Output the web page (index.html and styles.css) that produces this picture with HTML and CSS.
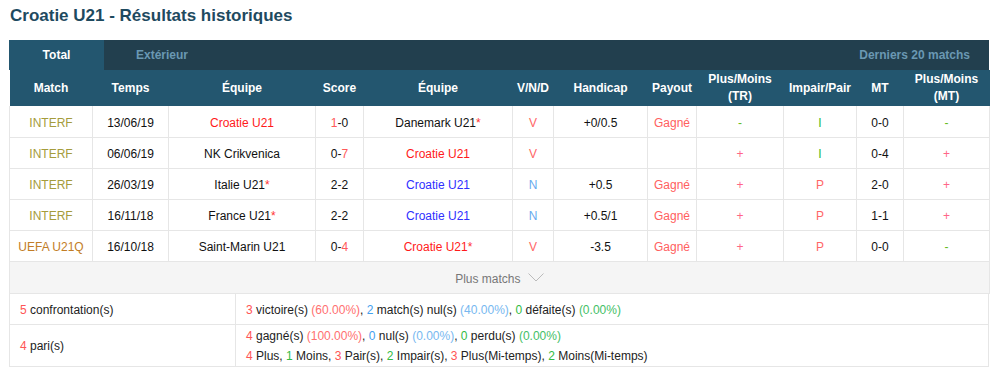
FILE: index.html
```html
<!DOCTYPE html>
<html lang="fr">
<head>
<meta charset="utf-8">
<title>Croatie U21 - Résultats historiques</title>
<link rel="stylesheet" href="styles.css">
</head>
<body>
<div class="wrap">
  <h2 class="title">Croatie U21 - Résultats historiques</h2>
  <div class="tabs">
    <span class="tab active">Total</span>
    <span class="tab">Extérieur</span>
    <span class="tab-right">Derniers 20 matchs</span>
  </div>
  <table class="res">
    <colgroup>
      <col style="width:83px"><col style="width:76px"><col style="width:147px"><col style="width:48px">
      <col style="width:149px"><col style="width:41px"><col style="width:94px"><col style="width:49px">
      <col style="width:87px"><col style="width:73px"><col style="width:47px"><col style="width:86px">
    </colgroup>
    <thead>
      <tr>
        <th>Match</th><th>Temps</th><th>Équipe</th><th>Score</th><th>Équipe</th><th>V/N/D</th>
        <th>Handicap</th><th>Payout</th><th>Plus/Moins<br>(TR)</th><th>Impair/Pair</th><th>MT</th><th>Plus/Moins<br>(MT)</th>
      </tr>
    </thead>
    <tbody>
      <tr>
        <td class="lg">INTERF</td><td>13/06/19</td><td class="red">Croatie U21</td>
        <td><span class="sr">1</span>-0</td><td>Danemark U21<span class="ast">*</span></td>
        <td class="v">V</td><td>+0/0.5</td><td class="g">Gagné</td><td class="mi">-</td><td class="i">I</td><td>0-0</td><td class="mi">-</td>
      </tr>
      <tr>
        <td class="lg">INTERF</td><td>06/06/19</td><td>NK Crikvenica</td>
        <td>0-<span class="sr">7</span></td><td class="red">Croatie U21</td>
        <td class="v">V</td><td></td><td></td><td class="pl">+</td><td class="i">I</td><td>0-4</td><td class="pl">+</td>
      </tr>
      <tr>
        <td class="lg">INTERF</td><td>26/03/19</td><td>Italie U21<span class="ast">*</span></td>
        <td>2-2</td><td class="blue">Croatie U21</td>
        <td class="n">N</td><td>+0.5</td><td class="g">Gagné</td><td class="pl">+</td><td class="p">P</td><td>2-0</td><td class="pl">+</td>
      </tr>
      <tr>
        <td class="lg">INTERF</td><td>16/11/18</td><td>France U21<span class="ast">*</span></td>
        <td>2-2</td><td class="blue">Croatie U21</td>
        <td class="n">N</td><td>+0.5/1</td><td class="g">Gagné</td><td class="pl">+</td><td class="p">P</td><td>1-1</td><td class="pl">+</td>
      </tr>
      <tr>
        <td class="lg2">UEFA U21Q</td><td>16/10/18</td><td>Saint-Marin U21</td>
        <td>0-<span class="sr">4</span></td><td class="red">Croatie U21<span class="ast">*</span></td>
        <td class="v">V</td><td>-3.5</td><td class="g">Gagné</td><td class="pl">+</td><td class="p">P</td><td>0-0</td><td class="mi">-</td>
      </tr>
      <tr class="more">
        <td colspan="12">Plus matchs <svg class="chev" width="16" height="9" viewBox="0 0 16 9"><path d="M0.5 0.5 L8 8 L15.5 0.5" fill="none" stroke="#bbb" stroke-width="1"/></svg></td>
      </tr>
    </tbody>
  </table>
  <table class="sum">
    <tr>
      <td class="sl"><span class="c-r">5</span> confrontation(s)</td>
      <td class="sv"><span class="c-r">3</span> victoire(s) <span class="c-r2">(60.00%)</span>, <span class="c-b">2</span> match(s) nul(s) <span class="c-b2">(40.00%)</span>, <span class="c-g">0</span> défaite(s) <span class="c-g2">(0.00%)</span></td>
    </tr>
    <tr class="tall">
      <td class="sl"><span class="c-r">4</span> pari(s)</td>
      <td class="sv"><span class="c-r">4</span> gagné(s) <span class="c-r2">(100.00%)</span>, <span class="c-b">0</span> nul(s) <span class="c-b2">(0.00%)</span>, <span class="c-g">0</span> perdu(s) <span class="c-g2">(0.00%)</span><br><span class="c-r">4</span> Plus, <span class="c-g">1</span> Moins, <span class="c-r">3</span> Pair(s), <span class="c-g">2</span> Impair(s), <span class="c-r">3</span> Plus(Mi-temps), <span class="c-g">2</span> Moins(Mi-temps)</td>
    </tr>
  </table>
</div>
</body>
</html>
```
FILE: styles.css
```css
* { box-sizing: border-box; }
body {
  margin: 0;
  background: #fff;
  font-family: "Liberation Sans", Arial, sans-serif;
  font-size: 12px;
  color: #222;
}
.wrap { padding: 5px 7px 0 9px; }
.title {
  margin: 0 0 0 1px;
  height: 35px;
  font-size: 17px;
  font-weight: bold;
  color: #1e4a5f;
  line-height: 22px;
}
.tabs {
  display: flex;
  align-items: center;
  height: 30px;
  background: #223f4e;
  font-weight: bold;
  font-size: 12px;
}
.tab {
  width: 95px;
  height: 30px;
  line-height: 30px;
  text-align: center;
  color: #6a98b3;
}
.tab.active { background: #23566f; color: #fff; }
.tab + .tab { width: 116px; }
.tab-right { margin-left: auto; padding-right: 19px; color: #6a98b3; }
table { border-collapse: collapse; width: 980px; table-layout: fixed; }
.res th {
  background: #23566f;
  color: #fff;
  font-weight: bold;
  height: 36px;
  line-height: 17px;
  padding: 0;
  text-align: center;
}
.res td {
  height: 31px;
  border: 1px solid #e6e6e6;
  text-align: center;
  padding: 3px 0 0;
  color: #111;
}
.res tbody tr:first-child td { border-top: none; }
.lg { color: #a59c3c !important; }
.lg2 { color: #c27d26 !important; }
.red { color: #ff1a1a !important; }
.blue { color: #2f2fff !important; }
.sr { color: #ff5a5a; }
.ast { color: #ff3333; }
.v { color: #ff6666 !important; }
.n { color: #66aaee !important; }
.g { color: #ff6060 !important; }
.mi { color: #66bb22 !important; }
.pl { color: #ff6688 !important; }
.i { color: #33bb33 !important; }
.p { color: #ff6666 !important; }
.res tr.more td {
  background: #f5f5f5;
  height: 32px;
  color: #777;
  border-bottom: 1px solid #e6e6e6;
}
.chev { vertical-align: 1px; margin-left: 4px; }
.sum td {
  border: 1px solid #e6e6e6;
  border-top: none;
  padding: 2px 10px 0;
  height: 31px;
  line-height: 20px;
  color: #222;
}
.sum .sl { width: 226px; }
.sum tr.tall td { height: 37px; padding-top: 1px; }
.c-r { color: #ff5555; }
.c-r2 { color: #ff7070; }
.c-b { color: #44a0ee; }
.c-b2 { color: #77b8f0; }
.c-g { color: #33bb44; }
.c-g2 { color: #44c066; }
```
